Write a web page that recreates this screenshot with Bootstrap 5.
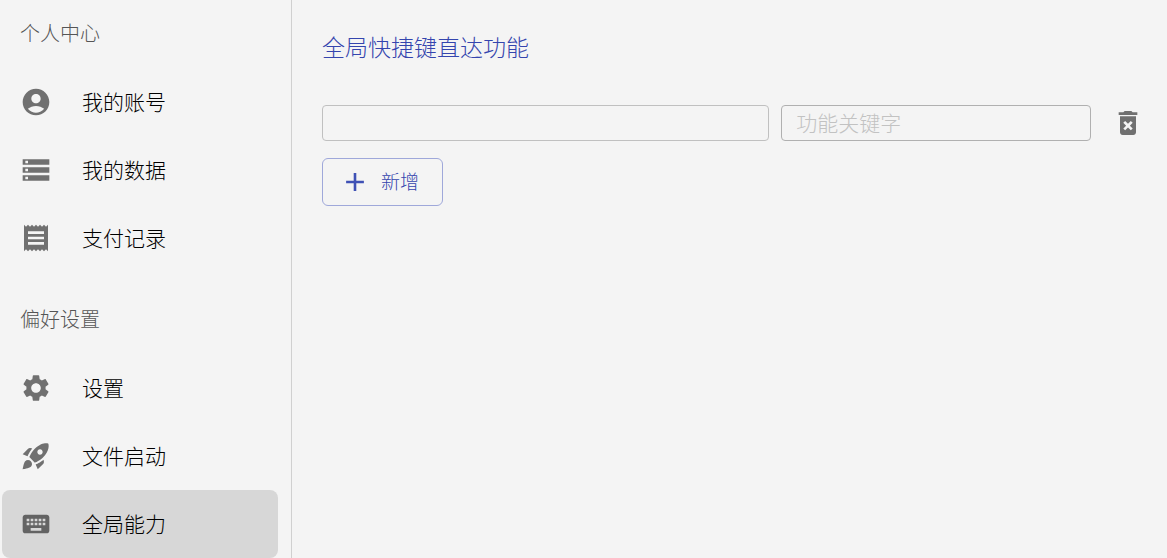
<!DOCTYPE html>
<html lang="zh-CN">
<head>
<meta charset="utf-8">
<meta name="viewport" content="width=device-width, initial-scale=1">
<title>全局能力</title>
<link href="https://cdn.jsdelivr.net/npm/bootstrap@5.3.0/dist/css/bootstrap.min.css" rel="stylesheet">
<style>
  body { background: #f4f4f4; color: #000; font-family: "Noto Sans CJK SC", sans-serif; font-weight: 300; }
  .side-panel { width: 292px; border-right: 1px solid #d0d0d0; padding: 0 13px 0 2px; }
  .side-title { height: 68px; padding: 0 18px 2px; font-size: 20px; line-height: 24px; font-weight: 300; color: #555; }
  .side-group + .side-group { margin-top: 14px; }
  .side-link { height: 68px; padding: 0 18px; gap: 30px; border-radius: 8px; color: #000; font-size: 21px; line-height: 24px; text-decoration: none; }
  .side-link span { padding-bottom: 3px; }
  .side-link.active { background: #d7d7d7; }
  .glyph { width: 32px; height: 32px; fill: #707070; flex: none; }
  .active .glyph { fill: #636363; }
  .content-panel { padding: 30px 14px 32px 30px; min-width: 0; }
  .content-title { font-size: 23px; line-height: 32px; font-weight: 300; color: #3445ae; margin-bottom: 43px; }
  .shortcut-row { display: grid; grid-template-columns: 13fr 9fr 50px; gap: 12px; margin-bottom: 17px; }
  .field { height: 36px; min-width: 0; padding: 0 14px 3px; font-size: 21px; line-height: 24px; font-weight: 300; background: transparent; border: 1px solid #b0b0b0; border-radius: 4px; }
  .field:focus { background: transparent; }
  .field::placeholder { color: #c2c2c2; }
  .field-key { border-color: #c0c0c0; }
  .btn-trash { height: 36px; border: 0; }
  .btn-add { height: 48px; padding: 0 23px 3px 19px; gap: 13px; font-size: 19px; line-height: 24px; font-weight: 300; color: #3445ae; border: 1px solid #9fa8da; border-radius: 6px; }
  .btn-add .glyph { width: 26px; height: 26px; fill: #3f51b5; margin-top: 3px; }
</style>
</head>
<body>
<div class="d-flex min-vh-100">
  <nav class="side-panel flex-shrink-0">
    <section class="side-group">
      <h2 class="side-title d-flex align-items-center m-0">个人中心</h2>
      <a class="side-link d-flex align-items-center" href="#"><svg class="glyph" viewBox="0 0 24 24" aria-hidden="true"><path d="M12 2C6.48 2 2 6.48 2 12s4.48 10 10 10 10-4.48 10-10S17.52 2 12 2zm0 4c1.93 0 3.5 1.57 3.5 3.5S13.93 13 12 13s-3.5-1.57-3.5-3.5S10.07 6 12 6zm0 14c-2.03 0-4.43-.82-6.14-2.88C7.55 15.8 9.68 15 12 15s4.45.8 6.14 2.12C16.43 19.18 14.03 20 12 20z"/></svg><span>我的账号</span></a>
      <a class="side-link d-flex align-items-center" href="#"><svg class="glyph" viewBox="0 0 24 24" aria-hidden="true"><path d="M2 20h20v-4H2v4zm2-3h2v2H4v-2zM2 4v4h20V4H2zm4 3H4V5h2v2zm-4 7h20v-4H2v4zm2-3h2v2H4v-2z"/></svg><span>我的数据</span></a>
      <a class="side-link d-flex align-items-center" href="#"><svg class="glyph" viewBox="0 0 24 24" aria-hidden="true"><path d="M18 17H6v-2h12v2zm0-4H6v-2h12v2zm0-4H6V7h12v2zM3 22l1.5-1.5L6 22l1.5-1.5L9 22l1.5-1.5L12 22l1.5-1.5L15 22l1.5-1.5L18 22l1.5-1.5L21 22V2l-1.5 1.5L18 2l-1.5 1.5L15 2l-1.5 1.5L12 2l-1.5 1.5L9 2 7.5 3.5 6 2 4.5 3.5 3 2v20z"/></svg><span>支付记录</span></a>
    </section>
    <section class="side-group">
      <h2 class="side-title d-flex align-items-center m-0">偏好设置</h2>
      <a class="side-link d-flex align-items-center" href="#"><svg class="glyph" viewBox="0 0 24 24" aria-hidden="true"><path d="M19.14 12.94c.04-.3.06-.61.06-.94 0-.32-.02-.64-.07-.94l2.03-1.58c.18-.14.23-.41.12-.61l-1.92-3.32c-.12-.22-.37-.29-.59-.22l-2.39.96c-.5-.38-1.03-.7-1.62-.94l-.36-2.54c-.04-.24-.24-.41-.48-.41h-3.84c-.24 0-.43.17-.47.41l-.36 2.54c-.59.24-1.13.57-1.62.94l-2.39-.96c-.22-.08-.47 0-.59.22L2.74 8.87c-.12.21-.08.47.12.61l2.03 1.58c-.05.3-.09.63-.09.94s.02.64.07.94l-2.03 1.58c-.18.14-.23.41-.12.61l1.92 3.32c.12.22.37.29.59.22l2.39-.96c.5.38 1.03.7 1.62.94l.36 2.54c.05.24.24.41.48.41h3.84c.24 0 .44-.17.47-.41l.36-2.54c.59-.24 1.13-.56 1.62-.94l2.39.96c.22.08.47 0 .59-.22l1.92-3.32c.12-.22.07-.47-.12-.61l-2.01-1.58zM12 15.6c-1.98 0-3.6-1.62-3.6-3.6s1.62-3.6 3.6-3.6 3.6 1.62 3.6 3.6-1.62 3.6-3.6 3.6z"/></svg><span>设置</span></a>
      <a class="side-link d-flex align-items-center" href="#"><svg class="glyph" viewBox="0 0 24 24" aria-hidden="true"><path d="M9.19 6.35c-2.04 2.29-3.44 5.58-3.57 5.89L2 10.69l4.05-4.05c.47-.47 1.15-.68 1.81-.55l1.33.26zM11.17 17s3.74-1.55 5.89-3.7c5.4-5.4 4.5-9.62 4.21-10.57-.95-.3-5.17-1.19-10.57 4.21C8.55 9.09 7 12.83 7 12.83L11.17 17zm6.48-2.19c-2.29 2.04-5.58 3.44-5.89 3.57L13.31 22l4.05-4.05c.47-.47.68-1.15.55-1.81l-.26-1.33zM9 18c0 .83-.34 1.58-.88 2.12C6.94 21.3 2 22 2 22s.7-4.94 1.88-6.12C4.42 15.34 5.17 15 6 15c1.66 0 3 1.34 3 3zm4-9c0-1.1.9-2 2-2s2 .9 2 2-.9 2-2 2-2-.9-2-2z"/></svg><span>文件启动</span></a>
      <a class="side-link active d-flex align-items-center" href="#" aria-current="page"><svg class="glyph" viewBox="0 0 24 24" aria-hidden="true"><path d="M20 5H4c-1.1 0-1.99.9-1.99 2L2 17c0 1.1.9 2 2 2h16c1.1 0 2-.9 2-2V7c0-1.1-.9-2-2-2zm-9 3h2v2h-2V8zm0 3h2v2h-2v-2zM8 8h2v2H8V8zm0 3h2v2H8v-2zm-1 2H5v-2h2v2zm0-3H5V8h2v2zm9 7H8v-2h8v2zm0-4h-2v-2h2v2zm0-3h-2V8h2v2zm3 3h-2v-2h2v2zm0-3h-2V8h2v2z"/></svg><span>全局能力</span></a>
    </section>
  </nav>
  <main class="content-panel flex-grow-1">
    <h1 class="content-title">全局快捷键直达功能</h1>
    <div class="shortcut-row align-items-center">
      <input type="text" class="form-control field field-key" aria-label="快捷键">
      <input type="text" class="form-control field" aria-label="功能关键字" placeholder="功能关键字">
      <button type="button" class="btn btn-trash d-flex align-items-center justify-content-center p-0" aria-label="删除"><svg class="glyph" viewBox="0 0 24 24" aria-hidden="true"><path fill-rule="evenodd" d="M6 19c0 1.1.9 2 2 2h8c1.1 0 2-.9 2-2V7H6v12zM8.46 11.88l1.41-1.41L12 12.59l2.12-2.12 1.41 1.41L13.41 14l2.12 2.12-1.41 1.41L12 15.41l-2.12 2.12-1.41-1.41L10.59 14l-2.13-2.12zM15.5 4l-1-1h-5l-1 1H5v2h14V4z"/></svg></button>
    </div>
    <button type="button" class="btn btn-add d-inline-flex align-items-center"><svg class="glyph" viewBox="0 0 24 24" aria-hidden="true"><path d="M20.2 13.2h-7v7h-2.4v-7h-7v-2.4h7v-7h2.4v7h7v2.4z"/></svg>新增</button>
  </main>
</div>
<script src="https://cdn.jsdelivr.net/npm/bootstrap@5.3.0/dist/js/bootstrap.bundle.min.js"></script>
</body>
</html>
